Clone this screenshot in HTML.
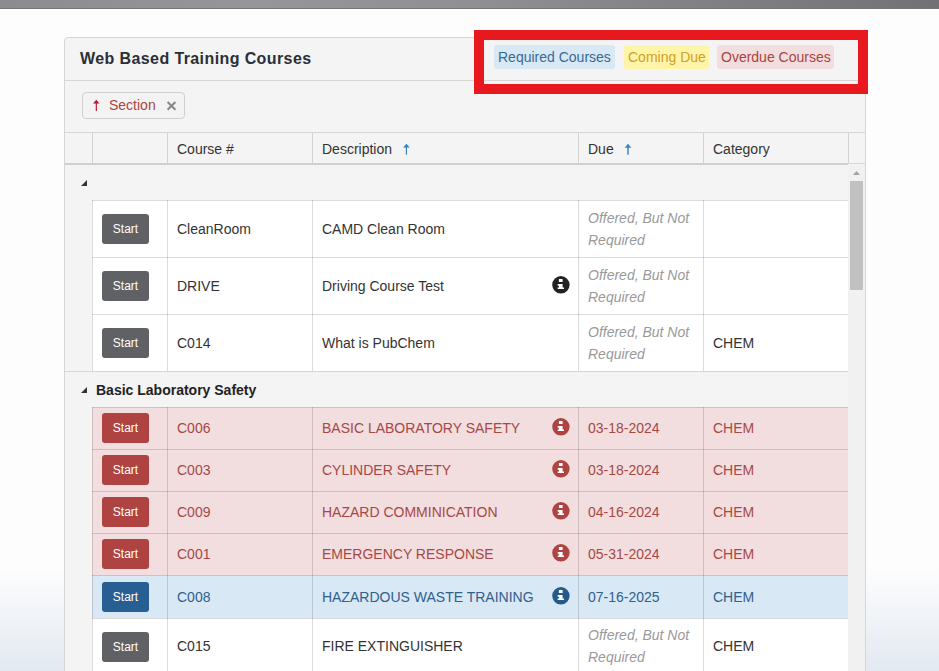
<!DOCTYPE html>
<html><head><meta charset="utf-8">
<style>
*{box-sizing:border-box;margin:0;padding:0}
html,body{width:939px;height:671px;overflow:hidden}
body{position:relative;font-family:"Liberation Sans",sans-serif;font-size:14px;color:#333;
background:linear-gradient(to bottom,#fdfdfe 0,#fdfdfe 568px,#e3e9f1 671px)}
.topbar{position:absolute;left:0;top:0;width:939px;height:9px;background:linear-gradient(to right,#8b8b90 0,#96969a 250px,#8f8f94 470px,#717176 939px);border-bottom:1px solid #76767b}
.panel{position:absolute;left:64px;top:37px;width:802px;height:700px;background:#f4f4f4;border:1px solid #d6d6d6;border-radius:4px}
.abs{position:absolute}
.title{position:absolute;left:80px;top:49px;font-size:16px;font-weight:bold;color:#2b2f36;line-height:20px;white-space:nowrap;letter-spacing:0.4px}
.hline{position:absolute;height:1px;background:#d6d6d6}
.vline{position:absolute;width:1px;background:#d3d3d3}
.chip{position:absolute;top:92px;left:82px;width:103px;height:27px;border:1px solid #cfcfcf;border-radius:4px;background:#f3f3f3}
.lbl{position:absolute;top:45px;height:24px;line-height:24px;border-radius:3px;padding:0 4px;white-space:nowrap;font-size:14px}
.hdr{position:absolute;top:133px;height:30px;line-height:20px;white-space:nowrap;padding-top:6px}
.row{position:absolute;left:92px;width:756px}
.cell{position:absolute;top:0;height:100%;display:flex;align-items:center;white-space:nowrap}
.btn{position:absolute;left:10px;width:47px;height:30px;border-radius:3px;color:#fff;font-size:12px;line-height:30px;text-align:center}
.off{font-style:italic;color:#999;line-height:22px;white-space:normal}
.red{background:#f2dede;color:#a64846}
.blue{background:#d9e8f5;color:#30608c}
.white{background:#fff}
.info{position:absolute;left:460px;width:18px;height:18px}
.redbox{position:absolute;left:474px;top:30px;width:394px;height:64px;border:10px solid #e8191e}
.tri{position:absolute;width:0;height:0;border-left:6px solid transparent;border-bottom:6px solid #333}
</style></head><body>
<div class="topbar"></div>
<div class="panel"></div>
<div class="title">Web Based Training Courses</div>
<div class="hline" style="left:65px;top:80px;width:800px"></div>

<div class="chip"></div>
<svg class="abs" style="left:92px;top:99px" width="8" height="13" viewBox="0 0 8 13"><path d="M4.3 0.8 L7.4 4.6 L4.9 4.6 L4.9 11.9 L3.75 11.9 L3.75 4.6 L1 4.6 Z" fill="#b3182c"/></svg>
<div class="abs" style="left:109px;top:95px;line-height:20px;color:#a94442">Section</div>
<svg class="abs" style="left:166px;top:100px" width="11" height="11" viewBox="0 0 11 11"><path d="M1.6 2 L9.4 9.8 M9.4 2 L1.6 9.8" stroke="#888" stroke-width="2"/></svg>

<div class="lbl" style="left:494px;width:121px;background:#d9e8f5;color:#386a93">Required Courses</div>
<div class="lbl" style="left:624px;width:85px;background:#fff5a8;color:#d39e24">Coming Due</div>
<div class="lbl" style="left:717px;width:117px;background:#f2dede;color:#a94442">Overdue Courses</div>
<!-- grid header -->
<div class="hline" style="left:65px;top:132px;width:800px"></div>
<div class="hline" style="left:65px;top:163px;width:783px;height:2px;background:#d0d0d0"></div>
<div class="hline" style="left:848px;top:163px;width:17px"></div>
<div class="vline" style="left:92px;top:133px;height:30px"></div>
<div class="vline" style="left:167px;top:133px;height:30px"></div>
<div class="vline" style="left:312px;top:133px;height:30px"></div>
<div class="vline" style="left:578px;top:133px;height:30px"></div>
<div class="vline" style="left:703px;top:133px;height:30px"></div>
<div class="vline" style="left:848px;top:133px;height:30px"></div>
<div class="hdr" style="left:177px">Course #</div>
<div class="hdr" style="left:322px">Description</div>
<svg class="abs" style="left:402px;top:143px" width="9" height="12" viewBox="0 0 9 12"><path d="M4.4 0.8 L7.8 4.5 L5.0 4.5 L5.0 11.8 L3.8 11.8 L3.8 4.5 L1.1 4.5 Z" fill="#3a80c2"/></svg>
<div class="hdr" style="left:588px">Due</div>
<svg class="abs" style="left:623px;top:143px" width="10" height="12" viewBox="0 0 10 12"><path d="M5 0.8 L8.4 4.8 L5.75 4.8 L5.75 11.8 L4.25 11.8 L4.25 4.8 L1.6 4.8 Z" fill="#4084c2"/></svg>
<div class="hdr" style="left:713px">Category</div>

<!-- scrollbar -->
<div class="abs" style="left:848px;top:165px;width:17px;height:520px;background:#f1f1f1"></div>
<svg class="abs" style="left:848px;top:165px" width="17" height="17" viewBox="0 0 17 17"><path d="M5 10 L8.5 6 L12 10 Z" fill="#a3a3a3"/></svg>
<div class="abs" style="left:850px;top:181px;width:13px;height:109px;background:#c1c1c1"></div>

<!-- group 1 -->
<div class="tri" style="left:81px;top:180px"></div>

<div id="rows">
<div class="row white" style="top:200px;height:57px">
<div class="hline" style="left:0;top:0;width:756px;background:rgba(0,0,0,.14)"></div>
<div class="vline" style="left:0;top:0;height:57px;background:rgba(0,0,0,.14)"></div>
<div class="vline" style="left:75px;top:0;height:57px;background:rgba(0,0,0,.14)"></div>
<div class="vline" style="left:220px;top:0;height:57px;background:rgba(0,0,0,.14)"></div>
<div class="vline" style="left:486px;top:0;height:57px;background:rgba(0,0,0,.14)"></div>
<div class="vline" style="left:611px;top:0;height:57px;background:rgba(0,0,0,.14)"></div>
<div class="btn" style="top:14px;background:#606165">Start</div>
<div class="cell" style="left:85px">CleanRoom</div>
<div class="cell" style="left:230px">CAMD Clean Room</div>
<div class="cell off" style="left:496px;width:120px"><span>Offered, But Not<br>Required</span></div>
<div class="cell" style="left:621px"></div>
</div>
<div class="row white" style="top:257px;height:57px">
<div class="hline" style="left:0;top:0;width:756px;background:rgba(0,0,0,.14)"></div>
<div class="vline" style="left:0;top:0;height:57px;background:rgba(0,0,0,.14)"></div>
<div class="vline" style="left:75px;top:0;height:57px;background:rgba(0,0,0,.14)"></div>
<div class="vline" style="left:220px;top:0;height:57px;background:rgba(0,0,0,.14)"></div>
<div class="vline" style="left:486px;top:0;height:57px;background:rgba(0,0,0,.14)"></div>
<div class="vline" style="left:611px;top:0;height:57px;background:rgba(0,0,0,.14)"></div>
<div class="btn" style="top:14px;background:#606165">Start</div>
<div class="cell" style="left:85px">DRIVE</div>
<div class="cell" style="left:230px">Driving Course Test</div>
<svg class="info" style="top:19px" width="18" height="18" viewBox="0 0 18 18"><circle cx="8.9" cy="8.8" r="8.7" fill="#222"/><path d="M6.9 3.1H10.6V5.9H6.9Z M5.7 8H10.6V11.4H12V13.1H5.7V11.4H6.9V9.7H5.7Z" fill="#fff"/></svg>
<div class="cell off" style="left:496px;width:120px"><span>Offered, But Not<br>Required</span></div>
<div class="cell" style="left:621px"></div>
</div>
<div class="row white" style="top:314px;height:57px">
<div class="hline" style="left:0;top:0;width:756px;background:rgba(0,0,0,.14)"></div>
<div class="vline" style="left:0;top:0;height:57px;background:rgba(0,0,0,.14)"></div>
<div class="vline" style="left:75px;top:0;height:57px;background:rgba(0,0,0,.14)"></div>
<div class="vline" style="left:220px;top:0;height:57px;background:rgba(0,0,0,.14)"></div>
<div class="vline" style="left:486px;top:0;height:57px;background:rgba(0,0,0,.14)"></div>
<div class="vline" style="left:611px;top:0;height:57px;background:rgba(0,0,0,.14)"></div>
<div class="btn" style="top:14px;background:#606165">Start</div>
<div class="cell" style="left:85px">C014</div>
<div class="cell" style="left:230px">What is PubChem</div>
<div class="cell off" style="left:496px;width:120px"><span>Offered, But Not<br>Required</span></div>
<div class="cell" style="left:621px">CHEM</div>
</div>
<div class="row red" style="top:407px;height:42px">
<div class="hline" style="left:0;top:0;width:756px;background:rgba(0,0,0,.14)"></div>
<div class="vline" style="left:0;top:0;height:42px;background:rgba(0,0,0,.14)"></div>
<div class="vline" style="left:75px;top:0;height:42px;background:rgba(0,0,0,.14)"></div>
<div class="vline" style="left:220px;top:0;height:42px;background:rgba(0,0,0,.14)"></div>
<div class="vline" style="left:486px;top:0;height:42px;background:rgba(0,0,0,.14)"></div>
<div class="vline" style="left:611px;top:0;height:42px;background:rgba(0,0,0,.14)"></div>
<div class="btn" style="top:6px;background:#ae4341">Start</div>
<div class="cell" style="left:85px">C006</div>
<div class="cell" style="left:230px">BASIC LABORATORY SAFETY</div>
<svg class="info" style="top:11px" width="18" height="18" viewBox="0 0 18 18"><circle cx="8.9" cy="8.8" r="8.7" fill="#ae4341"/><path d="M6.9 3.1H10.6V5.9H6.9Z M5.7 8H10.6V11.4H12V13.1H5.7V11.4H6.9V9.7H5.7Z" fill="#fff"/></svg>
<div class="cell" style="left:496px">03-18-2024</div>
<div class="cell" style="left:621px">CHEM</div>
</div>
<div class="row red" style="top:449px;height:42px">
<div class="hline" style="left:0;top:0;width:756px;background:rgba(0,0,0,.14)"></div>
<div class="vline" style="left:0;top:0;height:42px;background:rgba(0,0,0,.14)"></div>
<div class="vline" style="left:75px;top:0;height:42px;background:rgba(0,0,0,.14)"></div>
<div class="vline" style="left:220px;top:0;height:42px;background:rgba(0,0,0,.14)"></div>
<div class="vline" style="left:486px;top:0;height:42px;background:rgba(0,0,0,.14)"></div>
<div class="vline" style="left:611px;top:0;height:42px;background:rgba(0,0,0,.14)"></div>
<div class="btn" style="top:6px;background:#ae4341">Start</div>
<div class="cell" style="left:85px">C003</div>
<div class="cell" style="left:230px">CYLINDER SAFETY</div>
<svg class="info" style="top:11px" width="18" height="18" viewBox="0 0 18 18"><circle cx="8.9" cy="8.8" r="8.7" fill="#ae4341"/><path d="M6.9 3.1H10.6V5.9H6.9Z M5.7 8H10.6V11.4H12V13.1H5.7V11.4H6.9V9.7H5.7Z" fill="#fff"/></svg>
<div class="cell" style="left:496px">03-18-2024</div>
<div class="cell" style="left:621px">CHEM</div>
</div>
<div class="row red" style="top:491px;height:42px">
<div class="hline" style="left:0;top:0;width:756px;background:rgba(0,0,0,.14)"></div>
<div class="vline" style="left:0;top:0;height:42px;background:rgba(0,0,0,.14)"></div>
<div class="vline" style="left:75px;top:0;height:42px;background:rgba(0,0,0,.14)"></div>
<div class="vline" style="left:220px;top:0;height:42px;background:rgba(0,0,0,.14)"></div>
<div class="vline" style="left:486px;top:0;height:42px;background:rgba(0,0,0,.14)"></div>
<div class="vline" style="left:611px;top:0;height:42px;background:rgba(0,0,0,.14)"></div>
<div class="btn" style="top:6px;background:#ae4341">Start</div>
<div class="cell" style="left:85px">C009</div>
<div class="cell" style="left:230px">HAZARD COMMINICATION</div>
<svg class="info" style="top:11px" width="18" height="18" viewBox="0 0 18 18"><circle cx="8.9" cy="8.8" r="8.7" fill="#ae4341"/><path d="M6.9 3.1H10.6V5.9H6.9Z M5.7 8H10.6V11.4H12V13.1H5.7V11.4H6.9V9.7H5.7Z" fill="#fff"/></svg>
<div class="cell" style="left:496px">04-16-2024</div>
<div class="cell" style="left:621px">CHEM</div>
</div>
<div class="row red" style="top:533px;height:42px">
<div class="hline" style="left:0;top:0;width:756px;background:rgba(0,0,0,.14)"></div>
<div class="vline" style="left:0;top:0;height:42px;background:rgba(0,0,0,.14)"></div>
<div class="vline" style="left:75px;top:0;height:42px;background:rgba(0,0,0,.14)"></div>
<div class="vline" style="left:220px;top:0;height:42px;background:rgba(0,0,0,.14)"></div>
<div class="vline" style="left:486px;top:0;height:42px;background:rgba(0,0,0,.14)"></div>
<div class="vline" style="left:611px;top:0;height:42px;background:rgba(0,0,0,.14)"></div>
<div class="btn" style="top:6px;background:#ae4341">Start</div>
<div class="cell" style="left:85px">C001</div>
<div class="cell" style="left:230px">EMERGENCY RESPONSE</div>
<svg class="info" style="top:11px" width="18" height="18" viewBox="0 0 18 18"><circle cx="8.9" cy="8.8" r="8.7" fill="#ae4341"/><path d="M6.9 3.1H10.6V5.9H6.9Z M5.7 8H10.6V11.4H12V13.1H5.7V11.4H6.9V9.7H5.7Z" fill="#fff"/></svg>
<div class="cell" style="left:496px">05-31-2024</div>
<div class="cell" style="left:621px">CHEM</div>
</div>
<div class="row blue" style="top:575px;height:43px">
<div class="hline" style="left:0;top:0;width:756px;background:rgba(0,0,0,.14)"></div>
<div class="vline" style="left:0;top:0;height:43px;background:rgba(0,0,0,.14)"></div>
<div class="vline" style="left:75px;top:0;height:43px;background:rgba(0,0,0,.14)"></div>
<div class="vline" style="left:220px;top:0;height:43px;background:rgba(0,0,0,.14)"></div>
<div class="vline" style="left:486px;top:0;height:43px;background:rgba(0,0,0,.14)"></div>
<div class="vline" style="left:611px;top:0;height:43px;background:rgba(0,0,0,.14)"></div>
<div class="btn" style="top:7px;background:#275f93">Start</div>
<div class="cell" style="left:85px">C008</div>
<div class="cell" style="left:230px">HAZARDOUS WASTE TRAINING</div>
<svg class="info" style="top:12px" width="18" height="18" viewBox="0 0 18 18"><circle cx="8.9" cy="8.8" r="8.7" fill="#265a8a"/><path d="M6.9 3.1H10.6V5.9H6.9Z M5.7 8H10.6V11.4H12V13.1H5.7V11.4H6.9V9.7H5.7Z" fill="#fff"/></svg>
<div class="cell" style="left:496px">07-16-2025</div>
<div class="cell" style="left:621px">CHEM</div>
</div>
<div class="row white" style="top:618px;height:57px">
<div class="hline" style="left:0;top:0;width:756px;background:rgba(0,0,0,.14)"></div>
<div class="vline" style="left:0;top:0;height:57px;background:rgba(0,0,0,.14)"></div>
<div class="vline" style="left:75px;top:0;height:57px;background:rgba(0,0,0,.14)"></div>
<div class="vline" style="left:220px;top:0;height:57px;background:rgba(0,0,0,.14)"></div>
<div class="vline" style="left:486px;top:0;height:57px;background:rgba(0,0,0,.14)"></div>
<div class="vline" style="left:611px;top:0;height:57px;background:rgba(0,0,0,.14)"></div>
<div class="btn" style="top:14px;background:#606165">Start</div>
<div class="cell" style="left:85px;margin-top:-1px">C015</div>
<div class="cell" style="left:230px;margin-top:-1px">FIRE EXTINGUISHER</div>
<div class="cell off" style="left:496px;width:120px;margin-top:-1px"><span>Offered, But Not<br>Required</span></div>
<div class="cell" style="left:621px;margin-top:-1px">CHEM</div>
</div>
<div class="hline" style="left:65px;top:371px;width:783px"></div>
<div class="tri" style="left:81px;top:387px"></div>
<div class="abs" style="left:96px;top:380px;line-height:20px;font-weight:bold;color:#222">Basic Laboratory Safety</div>
<div class="redbox"></div>
</div>
</body></html>
